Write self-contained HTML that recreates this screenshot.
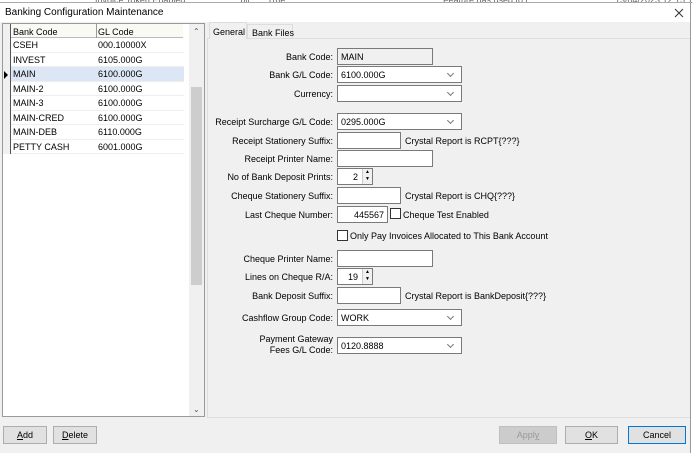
<!DOCTYPE html>
<html><head><style>
*{box-sizing:border-box;margin:0;padding:0}
body{width:694px;height:453px;background:#fff;font-family:"Liberation Sans",sans-serif;font-size:9px;color:#000;position:relative;overflow:hidden}
.a{position:absolute;white-space:nowrap}
.win{left:0;top:3px;width:691px;height:450px;background:#f0f0f0;border-right:1px solid #999}
.lbl{position:absolute;right:361px;text-align:right;white-space:nowrap}
.tb{position:absolute;background:#fff;border:1px solid #7a7a7a;height:17px;padding:3px 3px;white-space:nowrap}
.cb:after{content:"";position:absolute;right:8px;top:4px;width:4px;height:4px;border-right:1px solid #777;border-bottom:1px solid #777;transform:rotate(45deg)}
.chk{position:absolute;width:11px;height:11px;background:#fff;border:1px solid #333}
.btn{position:absolute;top:426px;height:18px;border:1px solid #adadad;background:#e1e1e1;text-align:center;line-height:16px}
.row{position:absolute;left:10px;width:173px;height:14.5px;border-bottom:1px solid #eee}
.row span{position:absolute;top:2px}
.spin{position:absolute;right:0;top:0;width:10px;height:15px;border-left:1px solid #ccc;background:#f0f0f0;font-size:5px;line-height:7px;text-align:center}
</style></head><body>
<div class="a" style="left:95px;top:-5px;color:#666;font-size:9px;white-space:nowrap">Invoice Token  Enabled &nbsp;&nbsp;&nbsp;&nbsp;&nbsp;&nbsp;&nbsp;&nbsp;&nbsp;&nbsp;&nbsp;&nbsp;&nbsp;&nbsp;&nbsp;&nbsp;&nbsp;&nbsp;&nbsp;&nbsp; bit &nbsp;&nbsp;&nbsp;&nbsp;&nbsp; True</div>
<div class="a" style="left:443px;top:-5px;color:#666;white-space:nowrap">Feature has used to t</div>
<div class="a" style="left:615px;top:-5px;color:#666;white-space:nowrap">13/04/2023 12:15:1</div>
<div class="a" style="left:0;top:2px;width:691px;height:1px;background:#aaa"></div>
<div class="a win">
 <div class="a" style="left:0;top:0;width:690px;height:19px;background:#fff"></div>
 <div class="a" style="left:5px;top:4px;font-size:10px">Banking Configuration Maintenance</div>
 <svg class="a" style="left:674px;top:5px" width="10" height="10" viewBox="0 0 10 10"><path d="M1 1L9 9M9 1L1 9" stroke="#333" stroke-width="1"/></svg>
 <!-- grid -->
 <div class="a" style="left:2px;top:20px;width:203px;height:394px;background:#fff;border:1px solid #999"></div>
 <div class="a" style="left:3px;top:21px;width:8px;height:130px;background:#f0f0f0;border-right:1px solid #555"></div>
 <div class="a" style="left:11px;top:21px;width:172px;height:14px;background:#fafaf4;border-bottom:1px solid #bbb"></div>
 <div class="a" style="left:96px;top:21px;width:1px;height:14px;background:#999"></div>
 <div class="a" style="left:13px;top:24px">Bank Code</div>
 <div class="a" style="left:98px;top:24px">GL Code</div>
 <div class="row" style="top:35px;left:11px"><span style="left:2px">CSEH</span><span style="left:87px">000.10000X</span></div>
 <div class="row" style="top:49.5px;left:11px"><span style="left:2px">INVEST</span><span style="left:87px">6105.000G</span></div>
 <div class="row" style="top:64px;left:11px;background:#dce6f4"><span style="left:2px">MAIN</span><span style="left:87px">6100.000G</span></div>
 <div class="a" style="left:4px;top:68px;width:0;height:0;border-left:4px solid #000;border-top:4px solid transparent;border-bottom:4px solid transparent"></div>
 <div class="row" style="top:78.5px;left:11px"><span style="left:2px">MAIN-2</span><span style="left:87px">6100.000G</span></div>
 <div class="row" style="top:93px;left:11px"><span style="left:2px">MAIN-3</span><span style="left:87px">6100.000G</span></div>
 <div class="row" style="top:107.5px;left:11px"><span style="left:2px">MAIN-CRED</span><span style="left:87px">6100.000G</span></div>
 <div class="row" style="top:122px;left:11px"><span style="left:2px">MAIN-DEB</span><span style="left:87px">6110.000G</span></div>
 <div class="row" style="top:136.5px;left:11px"><span style="left:2px">PETTY CASH</span><span style="left:87px">6001.000G</span></div>
 <div class="a" style="left:189px;top:21px;width:15px;height:392px;background:#f0f0f0"></div>
 <div class="a" style="left:191px;top:84px;width:11px;height:198px;background:#cdcdcd"></div>
 <div class="a" style="left:193px;top:24px;font-size:8px;color:#555">⌃</div>
 <div class="a" style="left:193px;top:402px;font-size:8px;color:#555">⌄</div>
 <!-- tabs -->
 <div class="a" style="left:207px;top:35px;width:483px;height:380px;background:#f0f0f0;border:1px solid #ddd;border-right:none"></div>
 <div class="a" style="left:209px;top:19px;width:38px;height:17px;background:#f0f0f0;border:1px solid #ddd;border-bottom:none;padding:4px 3px">General</div>
 <div class="a" style="left:247px;top:21px;width:46px;height:14px;background:#f0f0f0;border:1px solid #ddd;border-bottom:none;padding:3px 4px;white-space:nowrap;overflow:visible">Bank Files</div>
</div>
<div class="lbl" style="top:52px">Bank Code:</div><div class="tb" style="left:337px;top:48px;width:96px;background:#f0f0f0">MAIN</div>
<div class="lbl" style="top:70px">Bank G/L Code:</div><div class="tb cb" style="left:337px;top:66px;width:125px">6100.000G</div>
<div class="lbl" style="top:89px">Currency:</div><div class="tb cb" style="left:337px;top:85px;width:125px"></div>
<div class="lbl" style="top:117px">Receipt Surcharge G/L Code:</div><div class="tb cb" style="left:337px;top:113px;width:125px">0295.000G</div>
<div class="lbl" style="top:136px">Receipt Stationery Suffix:</div><div class="tb" style="left:337px;top:132px;width:64px"></div><div class="a" style="left:405px;top:136px">Crystal Report is RCPT{???}</div>
<div class="lbl" style="top:154px">Receipt Printer Name:</div><div class="tb" style="left:337px;top:150px;width:96px"></div>
<div class="lbl" style="top:172px">No of Bank Deposit Prints:</div><div class="tb" style="left:337px;top:168px;width:36px;text-align:right;padding-right:14px">2<div class="spin">▲<br>▼</div></div>
<div class="lbl" style="top:191px">Cheque Stationery Suffix:</div><div class="tb" style="left:337px;top:187px;width:64px"></div><div class="a" style="left:405px;top:191px">Crystal Report is CHQ{???}</div>
<div class="lbl" style="top:210px">Last Cheque Number:</div><div class="tb" style="left:337px;top:206px;width:51px;text-align:right">445567</div>
<div class="chk" style="left:390px;top:208px"></div><div class="a" style="left:403px;top:210px">Cheque Test Enabled</div>
<div class="chk" style="left:337px;top:230px"></div><div class="a" style="left:350px;top:231px">Only Pay Invoices Allocated to This Bank Account</div>
<div class="lbl" style="top:254px">Cheque Printer Name:</div><div class="tb" style="left:337px;top:250px;width:96px"></div>
<div class="lbl" style="top:272px">Lines on Cheque R/A:</div><div class="tb" style="left:337px;top:268px;width:36px;text-align:right;padding-right:14px">19<div class="spin">▲<br>▼</div></div>
<div class="lbl" style="top:291px">Bank Deposit Suffix:</div><div class="tb" style="left:337px;top:287px;width:64px"></div><div class="a" style="left:405px;top:291px">Crystal Report is BankDeposit{???}</div>
<div class="lbl" style="top:313px">Cashflow Group Code:</div><div class="tb cb" style="left:337px;top:309px;width:125px">WORK</div>
<div class="lbl" style="top:334px;line-height:11px">Payment Gateway<br>Fees G/L Code:</div><div class="tb cb" style="left:337px;top:337px;width:125px">0120.8888</div>
<div class="btn" style="left:3px;width:44px"><u>A</u>dd</div>
<div class="btn" style="left:53px;width:44px"><u>D</u>elete</div>
<div class="btn" style="left:499px;width:58px;background:#ccc;color:#999;border-color:#bfbfbf">Appl<u>y</u></div>
<div class="btn" style="left:565px;width:53px"><u>O</u>K</div>
<div class="btn" style="left:628px;width:58px;border:1px solid #0078d7">Cancel</div>
</body></html>
